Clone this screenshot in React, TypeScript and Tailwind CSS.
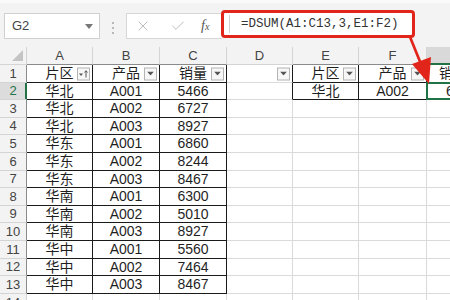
import React from 'react';
import { X, Check } from 'lucide-react';

const data: [string, string, number][] = [
  ['华北', 'A001', 5466],
  ['华北', 'A002', 6727],
  ['华北', 'A003', 8927],
  ['华东', 'A001', 6860],
  ['华东', 'A002', 8244],
  ['华东', 'A003', 8467],
  ['华南', 'A001', 6300],
  ['华南', 'A002', 5010],
  ['华南', 'A003', 8927],
  ['华中', 'A001', 5560],
  ['华中', 'A002', 7464],
  ['华中', 'A003', 8467],
];

const letters = ['A', 'B', 'C', 'D', 'E', 'F', 'G'];

// cells framed with black borders: A1:C13 and E1:F2
const inRegion = (r: number, c: number) =>
  (r >= 1 && r <= 13 && c >= 1 && c <= 3) || (r >= 1 && r <= 2 && c >= 5 && c <= 6);

const FilterButton = ({ sorted }: { sorted?: boolean }) => (
  <div className="absolute right-[2px] top-1/2 -translate-y-1/2 w-[13px] h-[13px] border border-[#b4b4b4] bg-[#f7f7f7] flex items-center justify-center">
    {sorted ? (
      <svg width="11" height="9" viewBox="0 0 11 9">
        <path d="M1 4 L5 4 L3 6.5 Z" fill="#555" />
        <path d="M8 8 L8 1.5 M6.5 3 L8 1.2 L9.5 3" stroke="#555" strokeWidth="1" fill="none" />
      </svg>
    ) : (
      <svg width="7" height="4" viewBox="0 0 7 4">
        <path d="M0 0 L7 0 L3.5 4 Z" fill="#555" />
      </svg>
    )}
  </div>
);

const cellContent = (r: number, c: number): React.ReactNode => {
  if (r === 1) {
    const heads: Record<number, string> = { 1: '片区', 2: '产品', 3: '销量', 5: '片区', 6: '产品' };
    return (
      <>
        {heads[c] && <span>{heads[c]}</span>}
        {c >= 1 && c <= 6 && <FilterButton sorted={c === 1} />}
      </>
    );
  }
  if (r >= 2 && r <= 13 && c <= 3) {
    const row = data[r - 2];
    return <span>{row[c - 1]}</span>;
  }
  if (r === 2 && c === 5) return <span>华北</span>;
  if (r === 2 && c === 6) return <span>A002</span>;
  return null;
};

export default function App() {
  const rows = Array.from({ length: 14 }, (_, i) => i + 1);
  const cols = [1, 2, 3, 4, 5, 6];

  return (
    <div className="relative w-[450px] h-[300px] overflow-hidden bg-white font-['Liberation_Sans','Noto_Sans_CJK_SC',sans-serif] text-[#1f1f1f]">
      {/* Formula bar */}
      <div className="h-[47px] bg-[#f3f3f3] border-t-[3px] border-t-[#fafafa] flex items-start">
        <div className="mt-[10px] ml-[4px] w-[96px] h-[26px] bg-white border border-[#d0d0d0] flex items-center justify-between pl-[7px] pr-[6px]">
          <span className="text-[13px] text-[#444]">G2</span>
          <svg width="8" height="5" viewBox="0 0 8 5">
            <path d="M0 0 L8 0 L4 5 Z" fill="#777" />
          </svg>
        </div>
        <div className="mt-[19px] ml-[12px] w-[2px] flex flex-col gap-[3px]">
          <div className="w-[2px] h-[2px] bg-[#b8b8b8]" />
          <div className="w-[2px] h-[2px] bg-[#b8b8b8]" />
          <div className="w-[2px] h-[2px] bg-[#b8b8b8]" />
        </div>
        <div className="mt-[10px] ml-[12px] w-[96px] h-[26px] bg-white border border-[#d6d6d6] border-r-0 flex items-center">
          <X size={16} strokeWidth={1.4} className="ml-[8px] text-[#b8b8b8]" />
          <Check size={16} strokeWidth={1.4} className="ml-[19px] text-[#b8b8b8]" />
          <span className="ml-[15px] font-['Liberation_Serif',serif] italic text-[14px] text-[#555] leading-none">
            f<span className="text-[10px]">x</span>
          </span>
        </div>
        <div className="mt-[7px] -ml-[1px] w-[194px] h-[28px] bg-white border-[3px] border-[#e1251b] rounded-[4px] flex items-center">
          <div className="ml-[5px] w-px h-[18px] bg-[#d0d0d0]" />
          <span className="ml-[11px] font-['Liberation_Mono',monospace] text-[12.5px] text-[#333]">
            =DSUM(A1:C13,3,E1:F2)
          </span>
        </div>
      </div>

      {/* Sheet grid */}
      <div className="grid grid-cols-[27px_66px_67px_67px_66px_66px_68px_67px] grid-rows-[18px_18px_17px_18px_17px_18px_18px_17px_18px_17px_18px_18px_17px_18px_18px] text-[14px]">
        {/* corner */}
        <div className="relative bg-[#f3f3f3] border-r border-b border-[#d4d4d4]">
          <svg className="absolute right-[3px] bottom-[3px]" width="11" height="11" viewBox="0 0 11 11">
            <path d="M11 0 L11 11 L0 11 Z" fill="#c4c4c4" />
          </svg>
        </div>
        {letters.map((l, i) => (
          <div
            key={l}
            className={
              'flex items-center justify-center text-[13px] border-r border-r-[#d4d4d4] border-b ' +
              (i === 6
                ? 'bg-[#d9d9d9] text-[#217346] border-b-[#217346] shadow-[inset_0_-1px_0_#217346]'
                : 'bg-[#f3f3f3] text-[#444] ' + (i <= 2 || i === 4 || i === 5 ? 'border-b-[#8a8a8a]' : 'border-b-[#d4d4d4]'))
            }
          >
            {l}
          </div>
        ))}

        {rows.map((r) => (
          <React.Fragment key={r}>
            <div
              className={
                'flex items-center justify-center text-[13px] border-b border-b-[#d4d4d4] border-r ' +
                (r === 2
                  ? 'bg-[#dcdcdc] text-[#217346] border-r-[#217346] shadow-[inset_-1px_0_0_#217346]'
                  : 'bg-[#f3f3f3] text-[#444] ' + (r <= 13 ? 'border-r-[#8a8a8a]' : 'border-r-[#d4d4d4]'))
              }
            >
              {r}
            </div>
            {cols.map((c) => {
              const right = inRegion(r, c) || inRegion(r, c + 1);
              const bottom = inRegion(r, c) || inRegion(r + 1, c);
              return (
                <div
                  key={c}
                  className={
                    'relative flex items-center justify-center border-r border-b ' +
                    (right ? 'border-r-[#1a1a1a] ' : 'border-r-[#dadada] ') +
                    (bottom ? 'border-b-[#1a1a1a]' : 'border-b-[#dadada]')
                  }
                >
                  {cellContent(r, c)}
                </div>
              );
            })}
            <div className="relative flex items-center border-b border-b-[#dadada] border-r border-r-[#dadada]">
              {r === 1 && <span className="pl-[12px] whitespace-nowrap">销量</span>}
              {r === 2 && (
                <>
                  <span className="pl-[19px]">6727</span>
                  <div className="absolute -left-[1px] -top-[1px] right-0 bottom-[-1px] border-2 border-[#217346]" />
                </>
              )}
            </div>
          </React.Fragment>
        ))}
      </div>

      {/* red arrow pointing at G2 */}
      <svg className="absolute left-0 top-0 pointer-events-none" width="450" height="300" viewBox="0 0 450 300">
        <path d="M409 38 L411.5 37 L422 63 L419.5 64 Z" fill="#e1251b" />
        <path d="M412 64 L431 57 L429 84 Z" fill="#e1251b" />
      </svg>
    </div>
  );
}
